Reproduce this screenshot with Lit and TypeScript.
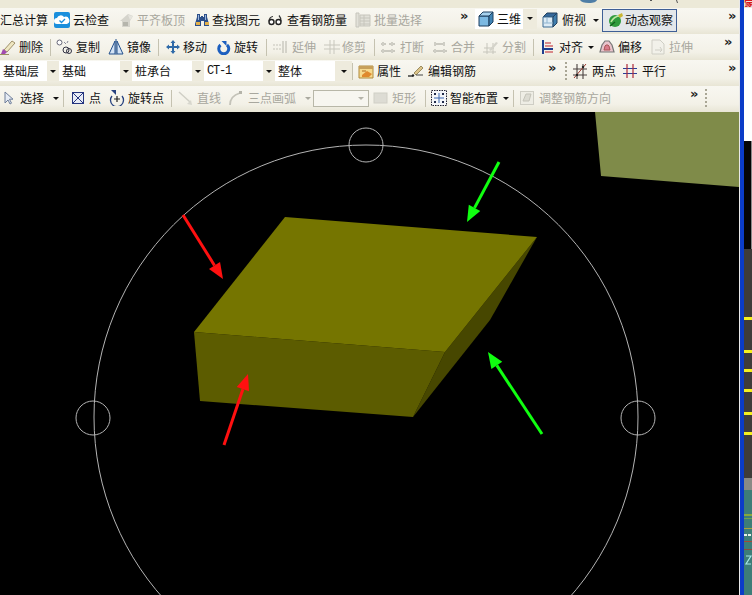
import { LitElement, css, html, nothing, svg } from "lit";
import { customElement } from "lit/decorators.js";
import { styleMap } from "lit/directives/style-map.js";

type Item = {
    x: number;
    k?: "sep" | "arrow" | "more" | "grip" | "combo" | "on" | "blank" | "input";
    ic?: string;
    lx?: number;
    t?: string;
    off?: boolean;
    w?: number;
    mono?: boolean;
    up?: boolean;
};

const ico = (body: unknown) => html`<svg class="ico" viewBox="0 0 16 16" width="16" height="16">${body}</svg>`;

const icons: Record<string, unknown> = {
    cloud: ico(svg`<rect x="0" y="0" width="16" height="16" rx="2" fill="#1b8fdc"></rect>
        <path d="M3 12a3 3 0 0 1 0-6 4 4 0 0 1 7-1 3.400 3.400 0 0 1 3 7z" fill="#fff"></path>
        <path d="M5.500 8.500l2 2 3.500-3.500" fill="none" stroke="#1b8fdc" stroke-width="1.300"></path>`),
    plate: ico(svg`<path d="M1 9l8-7 5 2-3 5v6H3V9z" fill="#d5d4cc"></path><path d="M4 10h5v4H4z" fill="#b5b5ac"></path><path d="M9 3l5 1-3 4z" fill="#e6e5de"></path>`),
    binoc: ico(svg`<path d="M3 2h3v3h1v-1h2v1h1V2h3v3l2 7v2H10V9H7v5H1v-2l2-7z" fill="#2c4f8a"></path><path d="M2 10h4v3H2zM11 10h4v3h-4z" fill="#e3b04a"></path><path d="M4 3h1v5H4zM11 3h1v5h-1z" fill="#9db7de"></path>`),
    glasses: ico(svg`<path d="M2 9.500c0-3 2-5 4-5M14 9.500c0-3-1-5-2-6" fill="none" stroke="#333" stroke-width="1.200"></path><circle cx="4.500" cy="10" r="2.500" fill="#fff" stroke="#222" stroke-width="1.400"></circle><circle cx="11.500" cy="10" r="2.500" fill="#fff" stroke="#222" stroke-width="1.400"></circle>`),
    batch: ico(svg`<path d="M1 1h3v14H1zM5 3h10v11H5z" fill="#e2e1d9" stroke="#c6c5bc"></path><path d="M5 6h10M5 9h10M5 12h10M9 3v11" stroke="#c6c5bc"></path>`),
    cube: ico(svg`<path d="M1 5h10v10H1z" fill="#7cb9e2" stroke="#1e3f5e"></path><path d="M1 5l4-4h10l-4 4z" fill="#a7d2ee" stroke="#1e3f5e"></path><path d="M11 5l4-4v10l-4 4z" fill="#3f83b4" stroke="#1e3f5e"></path>`),
    cubeTop: ico(svg`<path d="M1 5l4-4h10l-4 4z" fill="#35689a" stroke="#22405e"></path><path d="M1 5h10v10H1z" fill="#dcebf5" stroke="#3d6c94"></path><path d="M11 5l4-4v10l-4 4z" fill="#3f7eae" stroke="#22405e"></path><path d="M5 6v5H1M5 11l6 0" fill="none" stroke="#8fb4cf"></path>`),
    orbit: ico(svg`<ellipse cx="7" cy="9" rx="6" ry="6" fill="#2f9a3d"></ellipse><path d="M3 10c2-4 5-6 9-6" stroke="#bfe6a0" stroke-width="1.600" fill="none"></path><path d="M10 3l4-2 1 3-3 2z" fill="#c9b532"></path><path d="M2 14l5-4" stroke="#16601f" stroke-width="1.400"></path>`),
    erase: ico(svg`<path d="M4 11l8-9 3 2-8 9z" fill="#efe7c2" stroke="#8a7a50" stroke-width=".8"></path><path d="M3 10l4 3-2 2H1z" fill="#a24bb0"></path><path d="M0 15.500h9" stroke="#9a8f60"></path>`),
    copy: ico(svg`<circle cx="3.500" cy="3.500" r="2.500" fill="#fff" stroke="#667"></circle><circle cx="10" cy="11" r="3" fill="none" stroke="#334"></circle><circle cx="13" cy="12" r="2.500" fill="none" stroke="#334"></circle><path d="M8 3l2 2M12 2l-1 2" stroke="#889"></path>`),
    mirror: ico(svg`<path d="M7 2v13H1zM9 2v13h6z" fill="#d5e4f5" stroke="#23508c"></path><path d="M8 0v16" stroke="#23508c"></path>`),
    move: ico(svg`<path d="M8 1l2.500 3H9v3h3V5.500L15 8l-3 2.500V9H9v3h1.500L8 15l-2.500-3H7V9H4v1.500L1 8l3-2.500V7h3V4H5.500z" fill="#2f6aa8"></path>`),
    rotate: ico(svg`<path d="M4.500 6a5 5 0 1 0 6.500 0" fill="none" stroke="#1c5fbf" stroke-width="3"></path><path d="M5.500 2h5v5z" fill="#1c5fbf"></path>`),
    extend: ico(svg`<path d="M1 6h8M1 10h8" stroke="#c4c3b9" stroke-dasharray="2 1"></path><path d="M11 2v12M14 2v12" stroke="#b5b4aa"></path>`),
    trim: ico(svg`<path d="M0 6h16M0 10h16M6 1v14M10 1v14" stroke="#c8c7bd"></path>`),
    breakI: ico(svg`<path d="M1 5h5M9 5h6M1 12h14" stroke="#bdbcb2" stroke-width="1.500"></path><path d="M3 3v4M12 3v4M3 10v4M12 10v4" stroke="#cfcec5" stroke-width="2"></path>`),
    merge: ico(svg`<path d="M1 12h14M4 5h8" stroke="#bdbcb2" stroke-width="1.500"></path><path d="M3 3v4M12 3v4M3 10v4M12 10v4" stroke="#cfcec5" stroke-width="2"></path>`),
    split: ico(svg`<path d="M1 13h13M2 9h10M5 4v11M11 4v11" stroke="#c6c5bb"></path><path d="M7 11l7-8 2 1-7 8z" fill="#d4d3ca"></path>`),
    align: ico(svg`<path d="M2 1h2v14H2z" fill="#1f3f8f"></path><path d="M4 9h9v2H4z" fill="#1f3f8f"></path><path d="M5 4h6M5 7h8M5 13h8" stroke="#c0202a" stroke-width="1.200"></path>`),
    offset: ico(svg`<path d="M1 13l2-7 3-4h4l3 4 2 7z" fill="#e9c4cc" stroke="#777" stroke-width="1.200"></path><path d="M5 11l1-4 1-1h2l1 1 1 4z" fill="#d97b8c" stroke="#a55"></path>`),
    stretch: ico(svg`<path d="M2 1h8l4 4v10H2z" fill="#f2f1ea" stroke="#cfcec5"></path><path d="M5 11h6M10 8l2 3-2 2" stroke="#cfcec5" fill="none"></path>`),
    prop: ico(svg`<path d="M1 3h14v12H1z" fill="#f6d98e" stroke="#b08a3c"></path><path d="M1 3h14v3H1z" fill="#c7a05a"></path><path d="M4 12l5-4 5 3-3 3H4z" fill="#e0892e"></path><path d="M4 8h4" stroke="#b06a20"></path>`),
    editbar: ico(svg`<path d="M6 10l7-7 2 2-7 7z" fill="#dcc48a" stroke="#7a6a3a" stroke-width=".7"></path><path d="M0 13h5" stroke="#222" stroke-width="1.300"></path><path d="M8 12h7" stroke="#444"></path><circle cx="5" cy="12.500" r="1.200" fill="#222"></circle>`),
    twopt: ico(svg`<path d="M1 6h14M1 12h14M5 1v15M11 1v15" stroke="#4a4140" stroke-width="1.100"></path><path d="M2 15L14 1" stroke="#a03a30"></path><circle cx="11" cy="4" r="1.200" fill="#222"></circle><circle cx="5" cy="12" r="1.200" fill="#222"></circle>`),
    parallel: ico(svg`<path d="M1 5.500h14M1 10.500h14" stroke="#2a3f9a" stroke-width="1.200"></path><path d="M5 1v14M11 1v14" stroke="#b02a3a" stroke-width="1.200"></path>`),
    cursor: ico(svg`<path d="M5 2v11l3-3 2 4 1.500-.8-2-4H13z" fill="#e6ecf5" stroke="#6f7f9a"></path>`),
    point: ico(svg`<rect x="2.500" y="2.500" width="11" height="11" fill="#e8ecf6" stroke="#26357f"></rect><path d="M3 3l10 10M13 3L3 13" stroke="#26357f"></path>`),
    rotpt: ico(svg`<path d="M3 6a6.500 6.500 0 1 0 10 0" fill="none" stroke="#26417f" stroke-width="1.300"></path><path d="M2 0h5v5z" fill="#26417f"></path><path d="M8 6v6M5 9h6" stroke="#222" stroke-width="1.200"></path>`),
    lineI: ico(svg`<path d="M1 2l11 10" stroke="#cfcec5" stroke-width="1.400"></path><path d="M14 15l-5-1 4-4z" fill="#d8d7ce"></path>`),
    arc: ico(svg`<path d="M2 15c0-6 3-10 10-12" fill="none" stroke="#c4c3b9" stroke-width="1.800"></path><rect x="11" y="1" width="3" height="3" fill="#b5b4aa"></rect>`),
    rectI: ico(svg`<rect x="1" y="3" width="13" height="10" fill="#dddcd4" stroke="#d0cfc6"></rect>`),
    smart: ico(svg`<rect x=".5" y=".5" width="15" height="15" fill="#f4f6fa" stroke="#223" stroke-dasharray="1.500 1"></rect><path d="M8 3v10M3 8h10" stroke="#3a66b0"></path><path d="M3 3h2v2H3zM11 3h2v2h-2zM3 11h2v2H3zM11 11h2v2h-2z" fill="#202a4a"></path>`),
    adjust: ico(svg`<rect x="1.500" y="1.500" width="13" height="13" fill="#eeede5" stroke="#cfcec5"></rect><path d="M4 11l3-7h5l-2 7z" fill="#dcdbd2" stroke="#c4c3b9"></path>`),
};

const rows: Item[][] = [
    [
        { x: 0, t: "汇总计算" },
        { x: 54, ic: "cloud", lx: 73, t: "云检查" },
        { x: 119, ic: "plate", lx: 137, t: "平齐板顶", off: true },
        { x: 194, ic: "binoc", lx: 212, t: "查找图元" },
        { x: 267, ic: "glasses", lx: 287, t: "查看钢筋量" },
        { x: 355, ic: "batch", lx: 374, t: "批量选择", off: true },
        { x: 460, k: "more" },
        { x: 475, k: "combo", w: 48, ic: "cube", lx: 497, t: "三维", up: true },
        { x: 537, k: "blank" },
        { x: 542, ic: "cubeTop", lx: 562, t: "俯视" },
        { x: 590, k: "arrow" },
        { x: 602, k: "on", ic: "orbit", lx: 625, t: "动态观察" },
        { x: 677, k: "blank" },
        { x: 728, k: "more" },
    ],
    [
        { x: 4, ic: "erase", lx: 23, t: "删除" },
        { x: 54, k: "sep" },
        { x: 60, ic: "copy", lx: 80, t: "复制" },
        { x: 112, ic: "mirror", lx: 131, t: "镜像" },
        { x: 162, k: "sep" },
        { x: 169, ic: "move", lx: 187, t: "移动" },
        { x: 220, ic: "rotate", lx: 238, t: "旋转" },
        { x: 270, k: "sep" },
        { x: 276, ic: "extend", lx: 296, t: "延伸", off: true },
        { x: 328, ic: "trim", lx: 346, t: "修剪", off: true },
        { x: 378, k: "sep" },
        { x: 384, ic: "breakI", lx: 404, t: "打断", off: true },
        { x: 436, ic: "merge", lx: 455, t: "合并", off: true },
        { x: 486, ic: "split", lx: 506, t: "分割", off: true },
        { x: 537, k: "sep" },
        { x: 544, ic: "align", lx: 563, t: "对齐" },
        { x: 589, k: "arrow" },
        { x: 603, ic: "offset", lx: 622, t: "偏移" },
        { x: 654, ic: "stretch", lx: 673, t: "拉伸", off: true },
        { x: 728, k: "more" },
    ],
    [
        { x: 0, k: "combo", w: 47, t: "基础层" },
        { x: 59, k: "combo", w: 61, t: "基础" },
        { x: 132, k: "combo", w: 60, t: "桩承台" },
        { x: 204, k: "combo", w: 59, t: "CT-1", mono: true },
        { x: 275, k: "combo", w: 60, t: "整体" },
        { x: 352, k: "sep" },
        { x: 358, ic: "prop", lx: 377, t: "属性" },
        { x: 408, ic: "editbar", lx: 428, t: "编辑钢筋" },
        { x: 548, k: "more" },
        { x: 565, k: "grip" },
        { x: 572, ic: "twopt", lx: 592, t: "两点" },
        { x: 622, ic: "parallel", lx: 642, t: "平行" },
        { x: 728, k: "more" },
    ],
    [
        { x: 3, ic: "cursor", lx: 23, t: "选择" },
        { x: 53, k: "arrow" },
        { x: 66, k: "sep" },
        { x: 73, ic: "point", lx: 92, t: "点" },
        { x: 112, ic: "rotpt", lx: 131, t: "旋转点" },
        { x: 174, k: "sep" },
        { x: 181, ic: "lineI", lx: 200, t: "直线", off: true },
        { x: 231, ic: "arc", lx: 251, t: "三点画弧", off: true },
        { x: 305, k: "arrow", off: true },
        { x: 316, k: "input" },
        { x: 376, ic: "rectI", lx: 395, t: "矩形", off: true },
        { x: 428, k: "sep" },
        { x: 434, ic: "smart", lx: 453, t: "智能布置" },
        { x: 503, k: "arrow" },
        { x: 516, k: "sep" },
        { x: 522, ic: "adjust", lx: 542, t: "调整钢筋方向", off: true },
        { x: 693, k: "more" },
        { x: 708, k: "grip" },
        { x: 714, k: "blank" },
    ],
];

const ROW_WIDTH = 739;

const arrows = [
    { x1: 183, y1: 215, x2: 223, y2: 279, c: "#ff1010" },
    { x1: 224, y1: 445, x2: 248, y2: 374, c: "#ff1010" },
    { x1: 499, y1: 162, x2: 467, y2: 222, c: "#10ff10" },
    { x1: 542, y1: 434, x2: 488, y2: 352, c: "#10ff10" },
];

const ticks = [317, 350, 369, 389, 412, 432];

@customElement("app-root")
export class AppRoot extends LitElement {
    static override styles = css`
        :host {
            display: block;
            width: 752px;
            height: 595px;
            overflow: hidden;
            font-family: "Noto Sans CJK SC", "Liberation Sans", sans-serif;
            font-size: 12px;
            color: #111;
        }

        .page {
            display: flex;
            width: 752px;
            height: 595px;
        }

        .main {
            width: 739px;
            display: flex;
            flex-direction: column;
        }

        .top-band {
            height: 8px;
            background: #ece9d8;
            display: block;
        }

        .row {
            height: 26px;
            flex: none;
            box-sizing: border-box;
            padding-bottom: 2px;
            display: flex;
            align-items: center;
            background: linear-gradient(#f8f7f1, #f3f1e7 70%, #e8e5d5);
        }

        .row:nth-of-type(2) {
            padding-bottom: 0;
        }

        .row:nth-of-type(3) {
            padding-bottom: 4px;
        }

        .item {
            display: flex;
            align-items: center;
            flex: none;
            height: 100%;
            white-space: nowrap;
            line-height: 16px;
            box-sizing: border-box;
        }

        .item.off {
            color: #a8a79e;
        }

        .ico {
            display: block;
            flex: none;
        }

        .slot {
            flex: none;
        }

        .sep::before {
            content: "";
            width: 1px;
            height: 17px;
            background: #c5c2b0;
        }

        .more {
            font-family: "DejaVu Sans", sans-serif;
            font-size: 13px;
            font-weight: 700;
            align-items: flex-start;
            line-height: 15px;
            color: #222;
        }

        .more-mark {
            display: block;
        }

        .grip::before {
            content: "";
            width: 2px;
            height: 18px;
            background: repeating-linear-gradient(#a9a695 0 2px, transparent 2px 4px);
        }

        .blank {
            background: transparent;
        }

        .on {
            height: 23px;
            padding-left: 5px;
            border: 1px solid #3f5f96;
            background: #e3e7ea;
        }

        .combo {
            height: 20px;
            padding-left: 2px;
        }

        .combo.up {
            margin-bottom: 3px;
        }

        .combo-face {
            display: flex;
            align-items: center;
            height: 100%;
            background: #fff;
            box-sizing: border-box;
            padding-left: 3px;
            margin-left: -2px;
        }

        .combo-btn {
            flex: 1;
            height: 100%;
            display: flex;
            align-items: center;
            justify-content: center;
            background: #eeebdd;
        }

        .mono {
            font-family: "Liberation Mono", monospace;
            font-size: 12px;
            letter-spacing: -1.2px;
        }

        .tri {
            display: block;
            width: 0;
            height: 0;
            border: 3px solid transparent;
            border-top: 3px solid #111;
            border-bottom: 0;
            flex: none;
        }

        .arrow {
            padding-left: 3px;
        }

        .arrow.off .tri {
            border-top-color: #aaa99f;
        }

        .input-box {
            width: 56px;
            height: 17px;
            box-sizing: border-box;
            border: 1px solid #b8b7a8;
            background: #f7f6f0;
            display: flex;
            align-items: center;
            justify-content: flex-end;
            padding-right: 4px;
        }

        .input-box .tri {
            border-top-color: #b5b4aa;
        }

        .view {
            flex: 1;
            display: block;
            background: #000;
            min-height: 0;
        }

        .edge {
            width: 1px;
            background: #e8e8e8;
        }

        .blue {
            width: 4px;
            background: #0b3cc8;
        }

        .side {
            width: 8px;
            display: flex;
            flex-direction: column;
            background: #fff;
        }

        .side-red {
            height: 8px;
            overflow: hidden;
            color: #d8141c;
            font-size: 12px;
            line-height: 12px;
            background: #ece9d8;
        }

        .side-red span {
            display: block;
            margin-top: -5px;
            font-weight: 700;
        }

        .side-white {
            height: 133px;
            background: #fff;
        }

        .side-art {
            flex: 1;
            display: block;
        }
    `;

    private renderItem(item: Item, next: number) {
        const width = next - item.x;
        const style = styleMap({ width: `${width}px` });
        const off = item.off ? " off" : "";
        switch (item.k) {
            case "sep":
                return html`<div class="item sep" style=${style}></div>`;
            case "grip":
                return html`<div class="item grip" style=${style}></div>`;
            case "blank":
                return html`<div class="item blank" style=${style}></div>`;
            case "more":
                return html`<div class="item more" style=${style}><span class="more-mark">»</span></div>`;
            case "arrow":
                return html`<div class="item arrow${off}" style=${style}><i class="tri"></i></div>`;
            case "input":
                return html`<div class="item" style=${style}>
                    <div class="input-box"><i class="tri"></i></div>
                </div>`;
            case "combo":
                return html`<div class="item combo${item.up ? " up" : ""}" style=${style}>
                    <div class="combo-face" style=${styleMap({ width: `${item.w}px` })}>
                        ${item.ic ? this.renderSlot(item, 3) : nothing}
                        <span class=${item.mono ? "mono" : ""}>${item.t}</span>
                    </div>
                    <div class="combo-btn"><i class="tri"></i></div>
                </div>`;
            case "on":
                return html`<div class="item on" style=${style}>${this.renderSlot(item, 6)}<span>${item.t}</span></div>`;
            default:
                return html`<div class="item${off}" style=${style}>
                    ${item.ic ? this.renderSlot(item, 0) : nothing}<span>${item.t}</span>
                </div>`;
        }
    }

    private renderSlot(item: Item, pad: number) {
        const width = (item.lx ?? item.x) - item.x - pad;
        return html`<div class="slot" style=${styleMap({ width: `${width}px` })}>${icons[item.ic ?? ""]}</div>`;
    }

    private renderRow(items: Item[]) {
        return html`<div class="row">
            ${items.map((item, i) => this.renderItem(item, items[i + 1]?.x ?? ROW_WIDTH))}
        </div>`;
    }

    private renderArrow(a: (typeof arrows)[number]) {
        const len = Math.hypot(a.x2 - a.x1, a.y2 - a.y1);
        const ux = (a.x2 - a.x1) / len;
        const uy = (a.y2 - a.y1) / len;
        const bx = a.x2 - ux * 16;
        const by = a.y2 - uy * 16;
        const head = `${a.x2},${a.y2} ${bx - uy * 6.5},${by + ux * 6.5} ${bx + uy * 6.5},${by - ux * 6.5}`;
        return svg`
            <line x1=${a.x1} y1=${a.y1} x2=${bx} y2=${by} stroke=${a.c} stroke-width="3"></line>
            <polygon points=${head} fill=${a.c}></polygon>
        `;
    }

    override render() {
        return html`
            <div class="page">
                <div class="main">
                    <svg class="top-band" viewBox="0 0 739 8" width="739" height="8">
                        <path d="M580 0h17c-1 2-3 3-8 3s-8-1-9-3z" fill="#4f7ea6"></path>
                        <path d="M650 0h2v1h-2zM676 0l1 3h1l-1-3z" fill="#555"></path>
                    </svg>
                    ${rows.map((r) => this.renderRow(r))}
                    <svg class="view" viewBox="0 112 739 483" width="739" height="483">
                        <polygon points="595,112 739,112 739,187 601,176" fill="#7f8b49"></polygon>
                        <g fill="none" stroke="#b4b4b4" stroke-width="1">
                            <circle cx="366" cy="417" r="272"></circle>
                            <circle cx="366" cy="145" r="17"></circle>
                            <circle cx="93" cy="418" r="17"></circle>
                            <circle cx="638" cy="418" r="17"></circle>
                        </g>
                        <polygon points="537,237 445,352 413,417 490,320" fill="#474700"></polygon>
                        <polygon points="194,332 445,352 413,417 200,401" fill="#5c5c00"></polygon>
                        <polygon points="285,217 537,237 445,352 194,332" fill="#757500"></polygon>
                        ${arrows.map((a) => this.renderArrow(a))}
                    </svg>
                </div>
                <div class="edge"></div>
                <div class="blue"></div>
                <div class="side">
                    <div class="side-red"><span>豪</span></div>
                    <div class="side-white"></div>
                    <svg class="side-art" viewBox="744 141 8 454" width="8" height="454" preserveAspectRatio="none">
                        <rect x="744" y="141" width="8" height="108" fill="#050505"></rect>
                        <rect x="751" y="141" width="1" height="160" fill="#8a8a8a"></rect>
                        <rect x="744" y="249" width="8" height="229" fill="#3f3c3a"></rect>
                        ${ticks.map((y) => svg`<rect x="744" y=${y} width="8" height="3" fill="#f5f01e"></rect>`)}
                        <rect x="744" y="478" width="8" height="117" fill="#3d7d78"></rect>
                        <rect x="744" y="478" width="8" height="12" fill="#8a8a86"></rect>
                        <rect x="744" y="514" width="8" height="2" fill="#86a83e"></rect>
                        <rect x="744" y="518" width="8" height="1" fill="#6ea050"></rect>
                        <rect x="744" y="528" width="8" height="1" fill="#a8a040"></rect>
                        <rect x="744" y="534" width="3" height="2" fill="#e8f0e8"></rect>
                        <rect x="748" y="534" width="3" height="2" fill="#e8f0e8"></rect>
                        <rect x="744" y="541" width="8" height="1" fill="#a04a3a"></rect>
                        <rect x="744" y="549" width="8" height="1" fill="#8a4a40"></rect>
                        <path d="M746 556h5l-5 8h5" fill="none" stroke="#a8e8e8" stroke-width="1.200"></path>
                    </svg>
                </div>
            </div>
        `;
    }
}
